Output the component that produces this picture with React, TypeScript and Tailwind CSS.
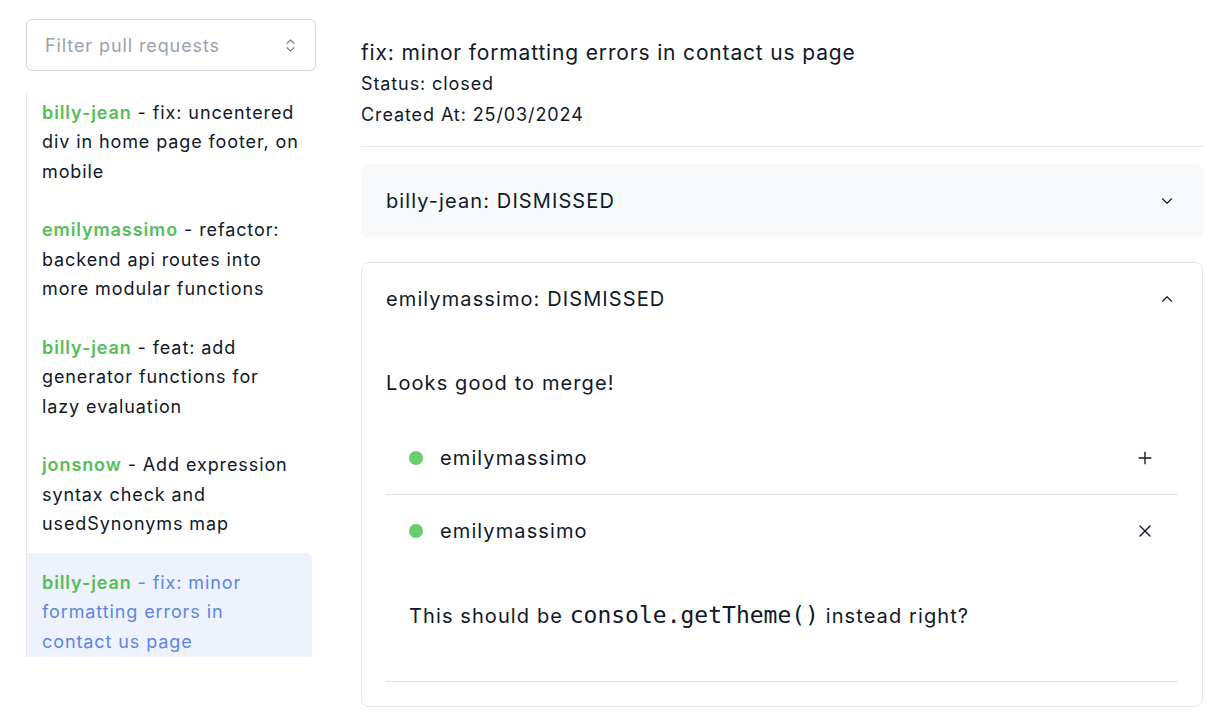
import { ChevronDown, ChevronUp, ChevronsUpDown, Plus, X } from "lucide-react";

const pulls = [
  { user: "billy-jean", title: "fix: uncentered div in home page footer, on mobile" },
  { user: "emilymassimo", title: "refactor: backend api routes into more modular functions" },
  { user: "billy-jean", title: "feat: add generator functions for lazy evaluation" },
  { user: "jonsnow", title: "Add expression syntax check and usedSynonyms map" },
  { user: "billy-jean", title: "fix: minor formatting errors in contact us page", active: true },
];

function Sidebar() {
  return (
    <aside className="w-[290px] shrink-0">
      <div className="flex items-center justify-between h-[52px] border border-gray-300 rounded-md pl-[18px] pr-[16px]">
        <span className="text-[18px] tracking-[0.05em] text-gray-400">Filter pull requests</span>
        <ChevronsUpDown className="h-[17px] w-[17px] text-gray-500" strokeWidth={1.5} />
      </div>

      <div className="mt-[22px] h-[564px] overflow-hidden border-l border-gray-200 w-[286px]">
        <ul className="-mt-[10px]">
          {pulls.map((p, i) => (
            <li
              key={i}
              className={
                p.active
                  ? "py-[14.5px] pl-[15px] pr-[18px] text-[18px] leading-[29.5px] tracking-[0.05em] bg-[#eef2fc] text-[#5b86e3] rounded-tr-md border-l border-[#4f7ee0] -ml-px"
                  : "py-[14.5px] pl-[15px] pr-[12px] text-[18px] leading-[29.5px] tracking-[0.05em] text-gray-900"
              }
            >
              <span className="font-semibold text-[#56bd5b]">{p.user}</span> - {p.title}
            </li>
          ))}
        </ul>
      </div>
    </aside>
  );
}

function Reviewer({ name, icon }: { name: string; icon: "plus" | "x" }) {
  return (
    <div className="flex items-center justify-between h-[72px] pl-[23px] pr-[23px]">
      <div className="flex items-center gap-[17px]">
        <span className="h-[14px] w-[14px] rounded-full bg-[#68cd6c]" />
        <span className="text-[20px] tracking-[0.055em] text-gray-900">{name}</span>
      </div>
      {icon === "plus" ? (
        <Plus className="h-[20px] w-[20px] text-gray-900" strokeWidth={1.6} />
      ) : (
        <X className="h-[20px] w-[20px] text-gray-900" strokeWidth={1.6} />
      )}
    </div>
  );
}

export default function App() {
  return (
    <div className="min-h-screen bg-white text-gray-900 flex gap-[45px] pl-[26px] pr-[24px] pt-[19px] font-['Inter','Noto_Sans',sans-serif]">
      <Sidebar />

      <main className="flex-1 pt-[19px]">
        <h1 className="text-[21px] leading-[30px] tracking-[0.04em]">fix: minor formatting errors in contact us page</h1>
        <p className="text-[18px] leading-[31px] tracking-[0.05em]">Status: closed</p>
        <p className="text-[18px] leading-[31px] tracking-[0.05em]">Created At: 25/03/2024</p>

        <div className="mt-[16px] border-t border-gray-200" />

        <div className="mt-[17px] h-[74px] bg-[#f8f9fb] rounded-lg flex items-center justify-between pl-[25px] pr-[27px]">
          <span className="text-[20px] tracking-[0.055em]">billy-jean: DISMISSED</span>
          <ChevronDown className="h-[18px] w-[18px] text-gray-900" strokeWidth={1.5} />
        </div>

        <div className="mt-[24px] border border-gray-200 rounded-lg">
          <div className="h-[72px] flex items-center justify-between pl-[24px] pr-[26px]">
            <span className="text-[20px] tracking-[0.055em]">emilymassimo: DISMISSED</span>
            <ChevronUp className="h-[18px] w-[18px] text-gray-900" strokeWidth={1.5} />
          </div>

          <div className="px-[24px] pb-[24px]">
            <p className="text-[20px] leading-[28px] tracking-[0.055em] pt-[34px]">Looks good to merge!</p>

            <div className="mt-[25px]">
              <Reviewer name="emilymassimo" icon="plus" />
              <div className="border-t border-gray-200" />
              <Reviewer name="emilymassimo" icon="x" />
              <div className="pl-[23px] pt-[34px] pb-[51px] text-[20px] leading-[28px] tracking-[0.055em]">
                This should be{" "}
                <code className="font-['DejaVu_Sans_Mono',monospace] text-[23px] tracking-normal">console.getTheme()</code>{" "}
                instead right?
              </div>
              <div className="border-t border-gray-200" />
            </div>
          </div>
        </div>
      </main>
    </div>
  );
}
